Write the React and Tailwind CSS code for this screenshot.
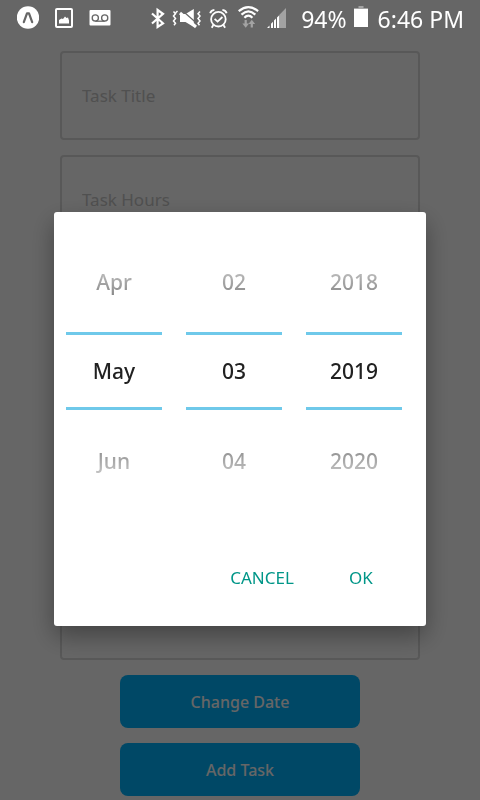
import React from 'react';

const fields = ['Task Title', 'Task Hours', 'Task Notes', 'Task Category', 'Task Priority', 'Task Date'];

const wheels = [
  { label: 'Month', values: ['Apr', 'May', 'Jun'] },
  { label: 'Day', values: ['02', '03', '04'] },
  { label: 'Year', values: ['2018', '2019', '2020'] },
];

function StatusBar() {
  return (
    <header className="flex h-[38px] shrink-0 items-center justify-between pr-4 pl-[17px] text-white">
      <div className="flex items-center gap-4">
        <svg width="22" height="38" viewBox="17 0 22 38" role="img" aria-label="Expo">
          <circle cx="28" cy="17.5" r="11.2" fill="#fff" />
          <path d="M23.8 22.200 L27 13.400 H29 L32.200 22.200" fill="none" stroke="#666" strokeWidth="2.200" strokeLinejoin="round" strokeLinecap="round" />
        </svg>
        <svg width="18" height="38" viewBox="55 0 18 38" role="img" aria-label="Screenshot saved">
          <rect x="56" y="9" width="16" height="18" rx="1" fill="none" stroke="#fff" strokeWidth="2" />
          <path d="M59 23.500V20l2.500-1.500 1.500.5 2-2.500 1.500 1.500 1.500-.5 1 3v3z" fill="#fff" />
        </svg>
        <svg width="22" height="38" viewBox="89 0 22 38" role="img" aria-label="Voicemail">
          <rect x="89.500" y="10" width="21" height="15.500" rx="1" fill="#fff" />
          <g fill="none" stroke="#666" strokeWidth="1.3">
            <circle cx="95.300" cy="18" r="3.100" />
            <circle cx="104.700" cy="18" r="3.100" />
            <path d="M95.300 21.200h9.400" />
          </g>
        </svg>
      </div>
      <div className="flex items-center">
        <svg width="151" height="38" viewBox="150 0 151 38" role="img" aria-label="Bluetooth, muted, alarm, Wi-Fi, signal">
          <path d="M152 13.500 L163 23.300 L157.600 27 V10 L163 13.900 L152 23.500" fill="none" stroke="#fff" strokeWidth="2.200" />
          <g fill="none" stroke="#fff" strokeWidth="1.500">
            <path d="M173.500 11.500l2 2.200-2 2.400 2 2.400-2 2.400 2 2.400-1.500 2" />
            <path d="M177.500 11l-2 2" />
            <path d="M200 11.500l-2 2.200 2 2.400-2 2.400 2 2.400-2 2.400 1.500 2" />
          </g>
          <path d="M180 14h5.500L193.800 9v18l-8.300-5h-5.500z" fill="#fff" />
          <path d="M184.500 12.500L197 23.500" stroke="#666" strokeWidth="1.200" />
          <path d="M180 13L196 27" stroke="#fff" strokeWidth="3" />
          <g fill="none" stroke="#fff" strokeWidth="1.800">
            <circle cx="218.400" cy="19.200" r="7.300" />
            <path d="M214.600 18.800l3 2.800 4.800-4.600" />
            <path d="M210.200 13.200q.6-2.900 4.200-3.400M226.600 13.200q-.6-2.900-4.200-3.400" />
            <path d="M213.400 25l-1.700 2.700M223.400 25l1.700 2.700" />
          </g>
          <g fill="none" stroke="#fff" strokeWidth="2.200">
            <path d="M238.700 11.200Q248.400 3.200 258.100 11.200" />
            <path d="M241.500 14.600Q248.400 8.200 255.300 14.600" />
            <path d="M244.400 17.800Q248.400 13.600 252.400 17.800" />
          </g>
          <path d="M244.600 20h2.200v3.500h2.200l-3.300 4.300-3.300-4.300h2.200z" fill="#a3a3a3" />
          <path d="M250.700 27.500h2.200V24h2.200l-3.300-4.300-3.300 4.300h2.200z" fill="#a3a3a3" />
          <path d="M286 8v20h-7V15.300z" fill="#a3a3a3" />
          <path d="M267 28l2.500-2.500V28zM271 28v-4.300l2-2V28zM274 28v-7.400l2-2V28zM277 28V17.600l2-2V28z" fill="#fff" />
        </svg>
        <span className="text-[23px] leading-6">94%</span>
        <svg className="mr-[5px] ml-[6px]" width="16" height="38" viewBox="353 0 16 38" role="img" aria-label="Battery">
          <path d="M358.500 6h5v2h4.500v1h-14V8h4.500z" fill="#a3a3a3" />
          <path d="M354 9h14v18h-14z" fill="#fff" />
        </svg>
        <time className="ml-1 text-[23px] leading-6">6:46 PM</time>
      </div>
    </header>
  );
}

function Wheel({ label, values }) {
  const [previous, current, next] = values;
  return (
    <div role="group" aria-label={label} className="flex flex-1 flex-col text-[21px] leading-7 font-medium text-[#212121]">
      <button type="button" className="h-[102px] pt-px [mask-image:linear-gradient(to_bottom,transparent_12px,black_112px)]">
        {previous}
      </button>
      <button type="button" aria-current="true" className="h-[78px] border-y-3 border-[#6fc9ea]">
        {current}
      </button>
      <button type="button" className="h-[102px] [mask-image:linear-gradient(to_top,transparent_12px,black_112px)]">
        {next}
      </button>
    </div>
  );
}

function DateDialog() {
  return (
    <div className="fixed inset-0 flex items-center justify-center bg-black/60 pt-[38px]">
      <div
        role="dialog"
        aria-label="Choose a date"
        className="w-full max-w-[372px] rounded-[3px] bg-white pt-[18px] pb-6 shadow-[0_10px_24px_rgba(0,0,0,0.35)]"
      >
        <div className="flex gap-6 pr-6 pl-3">
          {wheels.map((wheel) => (
            <Wheel key={wheel.label} {...wheel} />
          ))}
        </div>
        <div className="mt-[42px] flex justify-end gap-[11px] pr-[21px] text-[17px] text-[#009688]">
          <button type="button" className="h-12 min-w-[88px]">CANCEL</button>
          <button type="button" className="h-12 min-w-[88px]">OK</button>
        </div>
      </div>
    </div>
  );
}

export default function App() {
  return (
    <div className="relative h-screen overflow-hidden bg-white font-['Noto_Sans','Open_Sans',sans-serif]">
      <form className="mx-auto flex w-3/4 flex-col gap-[15px] pt-[51px]">
        {fields.map((field, i) => (
          <input
            key={field}
            type="text"
            aria-label={field}
            placeholder={i < 2 ? field : undefined}
            className="h-[89px] w-full rounded border-2 border-[#dcdcdc] px-5 text-[17px] placeholder:text-[#c7c7c7]"
          />
        ))}
        <button type="button" className="h-[53px] w-2/3 self-center rounded-lg bg-[#00b4ff] text-[16px] font-medium text-white">
          Change Date
        </button>
        <button type="button" className="h-[53px] w-2/3 self-center rounded-lg bg-[#00b4ff] text-[16px] font-medium text-white">
          Add Task
        </button>
      </form>
      <DateDialog />
      <div className="fixed inset-x-0 top-0">
        <StatusBar />
      </div>
    </div>
  );
}
